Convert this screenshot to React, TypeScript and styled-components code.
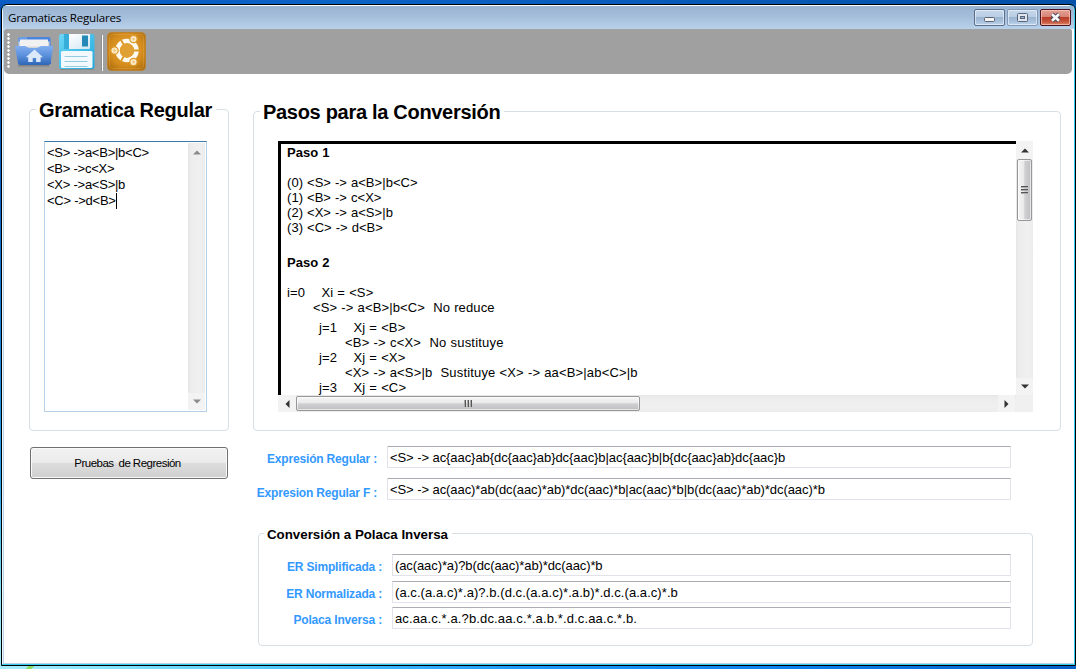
import React from "react";
import styled, { createGlobalStyle, css } from "styled-components";

const GlobalStyle = createGlobalStyle`
  * { box-sizing: border-box; }
  html, body { margin: 0; padding: 0; overflow: hidden; }
  body { font-family: "Liberation Sans", Arial, sans-serif; color: #000; }
`;

const Desktop = styled.div`
  width: 1076px;
  height: 669px;
  padding: 4px 0 3px 1px;
  background:
    linear-gradient(135deg, transparent 30%, #8edb63 34%, #8edb63 66%, transparent 70%) 24px 666px / 12px 3px no-repeat,
    linear-gradient(90deg, #a5ecfb 0, #8ae6fb 90px, #55cbfb 260px, #1e9bfa 520px, #0b80ec 800px, #0660c8 1076px) 0 666px / 1076px 3px no-repeat,
    linear-gradient(90deg, #0a5cc4 0, #0c63c6 350px, #0450a8 1076px) 0 0 / 1076px 4px no-repeat,
    linear-gradient(180deg, #0a55b8 0, #0e63ca 200px, #2aa3e4 480px, #8ee4f8 600px, #a5ecfb 669px);
`;

const Window = styled.div`
  display: flex;
  flex-direction: column;
  width: 1075px;
  height: 662px;
  border: 1px solid #000;
  border-radius: 6px 6px 0 0;
  background: #33cdf0;
  overflow: hidden;
`;

const Frame = styled.div`
  display: flex;
  flex-direction: column;
  width: 1072px;
  height: 659px;
  border-top: 1px solid #fff;
  border-left: 1px solid #effaff;
  border-radius: 6px 6px 0 0;
  background: #b9d1ea;
`;

const TitleBar = styled.header`
  display: flex;
  align-items: flex-start;
  justify-content: space-between;
  height: 23px;
  padding: 3px 3px 0 5px;
  background: linear-gradient(180deg, #98b3d1 0%, #a6bfdb 50%, #b9d1ea 100%);
`;

const Title = styled.span`
  font: 11.6px/18px "Open Sans", "Noto Sans", sans-serif;
  letter-spacing: -0.23px;
  white-space: pre;
`;

const Controls = styled.div`
  display: flex;
  gap: 2px;
`;

const ControlButton = styled.span<{ $kind: "min" | "max" | "close" }>`
  display: flex;
  align-items: center;
  justify-content: center;
  width: 31px;
  height: 17px;
  border: 1px solid ${(p) => (p.$kind === "close" ? "#4a1520" : p.$kind === "min" ? "#5b6f8b" : "#8399b5")};
  border-radius: 2px;
  box-shadow: inset 0 0 0 1px ${(p) => (p.$kind === "close" ? "rgba(255,205,190,.65)" : "rgba(235,245,255,.65)")};
  background: ${(p) =>
    p.$kind === "close"
      ? "linear-gradient(180deg,#e3a296 0,#d88475 46%,#b93d28 50%,#c4523a 75%,#dc8668 100%)"
      : "linear-gradient(180deg,#c6d7e9 0,#b9cde3 46%,#9bb4d0 50%,#a8c0db 75%,#bfd4ea 100%)"};
`;

const Client = styled.div`
  flex: 1;
  display: flex;
  flex-direction: column;
  width: 1070px;
  margin-left: 1px;
  background: #fff;
  min-height: 0;
  margin-bottom: 1px;
`;

const ToolBar = styled.div`
  display: flex;
  align-items: flex-start;
  width: 1068px;
  height: 45px;
  padding: 3px 0 0 3px;
  background: #a0a0a0;
  border-radius: 2px 2px 5px 5px;
`;

const Grip = styled.div`
  width: 3px;
  height: 36px;
  margin: 1px 4px 0 0;
  background: radial-gradient(circle at 1.5px 1.5px, #fff 0.9px, transparent 1.6px) 0 0 / 3px 4px;
`;

const Separator = styled.div`
  width: 2px;
  height: 36px;
  margin: 3px 4px 0 6px;
  border-left: 1px solid #8f8f8f;
  border-right: 1px solid #fff;
`;

const ToolIcon = styled.svg<{ $gap?: number }>`
  display: block;
  margin-left: ${(p) => p.$gap ?? 0}px;
`;

const Body = styled.main`
  display: flex;
  gap: 24px;
  padding: 24px 0 0 25px;
`;

const Column = styled.section<{ $w: number; $top?: number }>`
  display: flex;
  flex-direction: column;
  width: ${(p) => p.$w}px;
  padding-top: ${(p) => p.$top ?? 0}px;
`;

const Group = styled.fieldset<{ $h: number; $pad: string }>`
  min-width: 0;
  height: ${(p) => p.$h}px;
  margin: 0;
  padding: ${(p) => p.$pad};
  border: 1px solid #d5dfe5;
  border-radius: 4px;
`;

const Legend = styled.legend<{ $size: number; $ls: number; $shift: number }>`
  padding: 2px 4px 0 3px;
  margin-left: ${(p) => p.$shift}px;
  font-size: ${(p) => p.$size}px;
  font-weight: bold;
  letter-spacing: ${(p) => p.$ls}px;
  line-height: ${(p) => (p.$size > 15 ? 21 : 15)}px;
  white-space: pre;
`;

const GrammarBox = styled.div`
  display: flex;
  width: 163px;
  height: 271px;
  margin-top: 20px;
  padding: 1px;
  border: 1px solid #b5cfe7;
  border-top-color: #3d7bad;
`;

const GrammarText = styled.div`
  flex: 1;
  padding: 2px 0 0 1px;
  font-size: 13px;
  line-height: 16px;
  letter-spacing: -0.25px;
  white-space: pre;
`;

const Caret = styled.span`
  display: inline-block;
  width: 1px;
  height: 16px;
  vertical-align: top;
  background: #000;
`;

const Track = styled.div<{ $dir: "v" | "h" }>`
  display: flex;
  flex-direction: ${(p) => (p.$dir === "v" ? "column" : "row")};
  align-items: center;
  flex: none;
  ${(p) =>
    p.$dir === "v"
      ? css`
          width: 17px;
          background: linear-gradient(90deg, #e6e6e6 0, #ededed 3px, #f0f0f0 12px, #ececec 100%);
        `
      : css`
          height: 17px;
          background: linear-gradient(180deg, #e6e6e6 0, #ededed 3px, #f0f0f0 12px, #ececec 100%);
        `}
`;

const ArrowSlot = styled.span<{ $w: number; $h: number; $light?: boolean }>`
  display: flex;
  flex: none;
  align-items: center;
  justify-content: center;
  width: ${(p) => p.$w}px;
  height: ${(p) => p.$h}px;
  background: ${(p) => (p.$light ? "#f3f3f3" : "transparent")};
`;

const Spring = styled.span`
  flex: 1;
`;

const Thumb = styled.span<{ $dir: "v" | "h" }>`
  display: flex;
  align-items: center;
  justify-content: center;
  flex: none;
  width: ${(p) => (p.$dir === "v" ? 15 : 344)}px;
  height: ${(p) => (p.$dir === "v" ? 62 : 15)}px;
  border: 1px solid #979797;
  border-radius: 2px;
  box-shadow: inset 0 0 0 1px rgba(255, 255, 255, 0.6);
  background: linear-gradient(
    ${(p) => (p.$dir === "v" ? "90deg" : "180deg")},
    #f5f5f5 0,
    #e9e9eb 45%,
    #d0d0d3 52%,
    #bfbfc3 100%
  );
`;

const RunButton = styled.button`
  width: 198px;
  height: 32px;
  margin: 16px 0 0 1px;
  padding: 0 3px 0 0;
  border: 1px solid #707070;
  border-radius: 3px;
  box-shadow: inset 0 0 0 1px #fafafa;
  background: linear-gradient(180deg, #f2f2f2 0, #ebebeb 48%, #dddddd 50%, #cfcfcf 100%);
  color: #000;
  font: 11.5px/14px "Liberation Sans", Arial, sans-serif;
  letter-spacing: -0.5px;
  word-spacing: -0.2px;
  white-space: pre;
`;

const Browser = styled.div`
  display: grid;
  grid-template: 254px 17px / 738px 17px;
  width: 755px;
  margin-top: 18px;
  background: #f0f0f0;
`;

const Document = styled.div`
  overflow: hidden;
  padding: 1px 0 0 6px;
  border-top: 3px solid #000;
  border-left: 3px solid #000;
  background: #fff;
  font-size: 13px;
  line-height: 15px;
  word-spacing: 0.3px;
`;

const Line = styled.div<{ $bold?: boolean; $top?: number; $indent?: number; $ls?: number }>`
  margin-top: ${(p) => p.$top ?? 0}px;
  padding-left: ${(p) => p.$indent ?? 0}px;
  font-weight: ${(p) => (p.$bold ? "bold" : "normal")};
  letter-spacing: ${(p) => p.$ls ?? 0.05}px;
  white-space: pre;
`;

const FieldRow = styled.label<{ $top: number; $labelW: number; $shift: number }>`
  display: flex;
  height: 22px;
  margin-top: ${(p) => p.$top}px;
  & > span {
    width: ${(p) => p.$labelW}px;
    margin-right: 10px;
    padding-top: ${(p) => p.$shift}px;
    color: #3399ff;
    font-weight: bold;
    font-size: 12px;
    line-height: 16px;
    letter-spacing: -0.18px;
    text-align: right;
    white-space: pre;
  }
`;

const Field = styled.div<{ $w: number; $ls: number }>`
  width: ${(p) => p.$w}px;
  height: 22px;
  padding: 2px 0 0 2px;
  border: 1px solid #e2e3ea;
  border-top-color: #abadb3;
  border-radius: 1px;
  font-size: 13px;
  line-height: 17px;
  letter-spacing: ${(p) => p.$ls}px;
  white-space: pre;
`;

const PolishGroup = styled(Group)`
  width: 775px;
  margin: 25px 0 0 5px;
`;

const arrows = {
  up: "M0 4.5 L4 0.5 L8 4.5Z",
  down: "M0 0.5 L8 0.5 L4 4.5Z",
  left: "M4.5 0 L4.5 8 L0.5 4Z",
  right: "M0.5 0 L0.5 8 L4.5 4Z",
};

function Arrow({ dir, color = "#333" }: { dir: keyof typeof arrows; color?: string }) {
  const vertical = dir === "up" || dir === "down";
  return (
    <svg width={vertical ? 8 : 5} height={vertical ? 5 : 8}>
      <path d={arrows[dir]} fill={color} />
    </svg>
  );
}

function ThumbGrip({ dir }: { dir: "v" | "h" }) {
  return (
    <svg width="8" height="8" shapeRendering="crispEdges">
      <g transform={dir === "h" ? "rotate(90 4 4)" : undefined}>
        {[0, 3, 6].map((y) => (
          <React.Fragment key={y}>
            <rect x="0" y={y} width="7" height="1" fill="#555" />
            <rect x="0" y={y + 1} width="7" height="1" fill="#aaa" />
          </React.Fragment>
        ))}
      </g>
    </svg>
  );
}

function HomeFolderIcon() {
  return (
    <ToolIcon width="40" height="38" viewBox="0 0 40 38">
      <defs>
        <linearGradient id="folderFront" x1="0" y1="0" x2="0" y2="1">
          <stop offset="0" stopColor="#82aff0" />
          <stop offset=".5" stopColor="#5b90dc" />
          <stop offset="1" stopColor="#2f65b8" />
        </linearGradient>
        <linearGradient id="folderBack" x1="0" y1="0" x2="0" y2="1">
          <stop offset="0" stopColor="#6c9ee8" />
          <stop offset="1" stopColor="#3468bd" />
        </linearGradient>
      </defs>
      <path d="M4 33h31v1.500H4z" fill="#666" opacity=".5" />
      <path d="M4 7q0-2 2-2h7l1 2h-2v5h25v20H4z" fill="url(#folderBack)" />
      <path d="M13 5h22q1.500 0 1.500 1.500V14H6V8h7z" fill="#4a84dc" />
      <path d="M4.500 9.500h31v7h-31z" fill="#d3d6da" />
      <path d="M6 7.500h28v7H6z" fill="#f1f1f1" />
      <path d="M1 15q0-1 1-1h9l4 2h8l4-2h11q1.500 0 1.200 1L36.500 31q-.3 2-2 2H6q-1.800 0-2-2z" fill="url(#folderFront)" />
      <path d="M20.500 17.500l8.500 7.700h-2.400V30h-4.500v-4h-3.400v4h-4.500v-4.800h-2.400z" fill="#dbe8f9" />
    </ToolIcon>
  );
}

function SaveIcon() {
  return (
    <ToolIcon $gap={5} width="36" height="38" viewBox="0 0 36 38">
      <defs>
        <linearGradient id="diskBody" x1="0" y1="0" x2="1" y2="1">
          <stop offset="0" stopColor="#6dd6f5" />
          <stop offset="1" stopColor="#1fa9df" />
        </linearGradient>
        <linearGradient id="diskShutter" x1="0" y1="0" x2="1" y2="1">
          <stop offset="0" stopColor="#ffffff" />
          <stop offset="1" stopColor="#cfe6f2" />
        </linearGradient>
      </defs>
      <path d="M1 37h34v1H1z" fill="#777" opacity=".5" />
      <rect x="0" y="2" width="35.500" height="35" rx="2.500" fill="url(#diskBody)" />
      <path d="M5 2h24v15H5z" fill="#37add9" />
      <path d="M10 2h21v14q0 1-1 1H10z" fill="url(#diskShutter)" />
      <rect x="23" y="3.500" width="6" height="11" fill="#2589b8" />
      <rect x="2" y="19" width="31.500" height="17" rx="1.500" fill="#f1f9fd" />
      <path d="M5.500 24.500h23M5.500 29.500h23M5.500 34.500h23" stroke="#93cbe0" strokeWidth="1" />
    </ToolIcon>
  );
}

function CircleOfFriendsIcon() {
  return (
    <ToolIcon width="39" height="39" viewBox="0 0 39 39">
      <defs>
        <radialGradient id="tile" cx=".5" cy=".45" r=".7">
          <stop offset="0" stopColor="#e8a63c" />
          <stop offset=".6" stopColor="#d48c1c" />
          <stop offset="1" stopColor="#a8690c" />
        </radialGradient>
      </defs>
      <rect x=".5" y=".5" width="38" height="38" rx="4" fill="url(#tile)" stroke="#bd8330" />
      <rect x="2.500" y="2.500" width="34" height="34" rx="3" fill="none" stroke="#e5ab4c" opacity=".4" />
      <circle cx="20" cy="18.500" r="9.500" fill="none" stroke="#fffaf0" strokeWidth="4.600" />
      <g stroke="#dc9827" strokeWidth="1.800">
        <path d="M20 18.500H33M20 18.500L13.500 7M20 18.500L13.500 30" />
      </g>
      <circle cx="20" cy="18.500" r="7.200" fill="#e0a034" />
      <g fill="#fde9c6" stroke="#dc9827" strokeWidth="1.200">
        <circle cx="7.500" cy="18.500" r="3.700" />
        <circle cx="26.500" cy="7" r="3.700" />
        <circle cx="26.500" cy="30" r="3.700" />
      </g>
      <g fill="#f0c680">
        <circle cx="7.500" cy="18.500" r="1.300" />
        <circle cx="26.500" cy="7" r="1.300" />
        <circle cx="26.500" cy="30" r="1.300" />
      </g>
    </ToolIcon>
  );
}

function WindowControls() {
  return (
    <Controls>
      <ControlButton $kind="min">
        <svg width="13" height="13">
          <rect x="1.500" y="6.500" width="10" height="4" rx="1" fill="#f4f4f4" stroke="#596474" />
        </svg>
      </ControlButton>
      <ControlButton $kind="max">
        <svg width="13" height="11">
          <rect x="1.500" y="1.500" width="10" height="8" rx="1" fill="#dfe6ee" stroke="#56647c" />
          <rect x="4.500" y="4.500" width="4" height="2" fill="#9fb6d1" stroke="#56647c" />
        </svg>
      </ControlButton>
      <ControlButton $kind="close">
        <svg width="13" height="11" viewBox="0 0 13 11">
          <path d="M3 2.300L10 8.700M10 2.300L3 8.700" stroke="#4a4a5c" strokeWidth="4.600" />
          <path d="M3 2.300L10 8.700M10 2.300L3 8.700" stroke="#f7f7f7" strokeWidth="2.700" />
        </svg>
      </ControlButton>
    </Controls>
  );
}

const grammar = ["<S> ->a<B>|b<C>", "<B> ->c<X>", "<X> ->a<S>|b", "<C> ->d<B>"];

const steps: { text: string; bold?: boolean; top?: number; indent?: number; spacing?: number }[] = [
  { text: "Paso 1", bold: true },
  { text: "(0) <S> -> a<B>|b<C>", top: 15 },
  { text: "(1) <B> -> c<X>" },
  { text: "(2) <X> -> a<S>|b" },
  { text: "(3) <C> -> d<B>" },
  { text: "Paso 2", bold: true, top: 20 },
  { text: "i=0    Xi = <S>", top: 15, spacing: 0.15 },
  { text: "<S> -> a<B>|b<C>  No reduce", indent: 26, spacing: 0.14 },
  { text: "j=1    Xj = <B>", top: 5, indent: 32, spacing: 0.15 },
  { text: "<B> -> c<X>  No sustituye", indent: 58, spacing: 0.2 },
  { text: "j=2    Xj = <X>", indent: 32, spacing: 0.15 },
  { text: "<X> -> a<S>|b  Sustituye <X> -> aa<B>|ab<C>|b", indent: 58, spacing: 0.16 },
  { text: "j=3    Xj = <C>", indent: 32, spacing: 0.15 },
];

function PolishSection() {
  return (
    <PolishGroup $h={121} $pad="0">
      <Legend $size={13.33} $ls={-0.02} $shift={5}>Conversión a Polaca Inversa</Legend>
      <FieldRow $top={12} $labelW={123} $shift={5}>
        <span>ER Simplificada :</span>
        <Field $w={619} $ls={-0.1}>(ac(aac)*a)?b(dc(aac)*ab)*dc(aac)*b</Field>
      </FieldRow>
      <FieldRow $top={5} $labelW={123} $shift={5}>
        <span>ER Normalizada :</span>
        <Field $w={619} $ls={0.06}>(a.c.(a.a.c)*.a)?.b.(d.c.(a.a.c)*.a.b)*.d.c.(a.a.c)*.b</Field>
      </FieldRow>
      <FieldRow $top={4} $labelW={123} $shift={5}>
        <span>Polaca Inversa :</span>
        <Field $w={619} $ls={0.13}>ac.aa.c.*.a.?b.dc.aa.c.*.a.b.*.d.c.aa.c.*.b.</Field>
      </FieldRow>
    </PolishGroup>
  );
}

export default function App() {
  return (
    <>
      <GlobalStyle />
      <Desktop>
        <Window>
          <Frame>
            <TitleBar>
              <Title>Gramaticas Regulares</Title>
              <WindowControls />
            </TitleBar>
            <Client>
              <ToolBar>
                <Grip />
                <HomeFolderIcon />
                <SaveIcon />
                <Separator />
                <CircleOfFriendsIcon />
              </ToolBar>
              <Body>
                <Column $w={200}>
                  <Group $h={333} $pad="0 0 0 14px">
                    <Legend $size={20} $ls={-0.28} $shift={-8}>Gramatica Regular</Legend>
                    <GrammarBox>
                      <GrammarText>
                        {grammar.map((rule, i) => (
                          <div key={rule}>
                            {rule}
                            {i === grammar.length - 1 && <Caret />}
                          </div>
                        ))}
                      </GrammarText>
                      <Track $dir="v">
                        <ArrowSlot $w={17} $h={19}><Arrow dir="up" color="#8b8b8b" /></ArrowSlot>
                        <Spring />
                        <ArrowSlot $w={17} $h={17} $light><Arrow dir="down" color="#8b8b8b" /></ArrowSlot>
                      </Track>
                    </GrammarBox>
                  </Group>
                  <RunButton>Pruebas  de Regresión</RunButton>
                </Column>
                <Column $w={808} $top={2}>
                  <Group $h={331} $pad="0 0 0 24px">
                    <Legend $size={20} $ls={-0.3} $shift={-18}>Pasos para la Conversión</Legend>
                    <Browser>
                      <Document>
                        {steps.map((s) => (
                          <Line key={s.text} $bold={s.bold} $top={s.top} $indent={s.indent} $ls={s.spacing}>
                            {s.text}
                          </Line>
                        ))}
                      </Document>
                      <Track $dir="v">
                        <ArrowSlot $w={17} $h={18} $light><Arrow dir="up" /></ArrowSlot>
                        <Thumb $dir="v"><ThumbGrip dir="v" /></Thumb>
                        <Spring />
                        <ArrowSlot $w={17} $h={17} $light><Arrow dir="down" /></ArrowSlot>
                      </Track>
                      <Track $dir="h">
                        <ArrowSlot $w={18} $h={17} $light><Arrow dir="left" /></ArrowSlot>
                        <Thumb $dir="h"><ThumbGrip dir="h" /></Thumb>
                        <Spring />
                        <ArrowSlot $w={17} $h={17} $light><Arrow dir="right" /></ArrowSlot>
                        <ArrowSlot $w={1} $h={17} />
                      </Track>
                    </Browser>
                  </Group>
                  <FieldRow $top={15} $labelW={124} $shift={5}>
                    <span>Expresión Regular :</span>
                    <Field $w={624} $ls={-0.07}>{"<S> -> ac{aac}ab{dc{aac}ab}dc{aac}b|ac{aac}b|b{dc{aac}ab}dc{aac}b"}</Field>
                  </FieldRow>
                  <FieldRow $top={10} $labelW={124} $shift={7}>
                    <span>Expresion Regular F :</span>
                    <Field $w={624} $ls={-0.07}>{"<S> -> ac(aac)*ab(dc(aac)*ab)*dc(aac)*b|ac(aac)*b|b(dc(aac)*ab)*dc(aac)*b"}</Field>
                  </FieldRow>
                  <PolishSection />
                </Column>
              </Body>
            </Client>
          </Frame>
        </Window>
      </Desktop>
    </>
  );
}
